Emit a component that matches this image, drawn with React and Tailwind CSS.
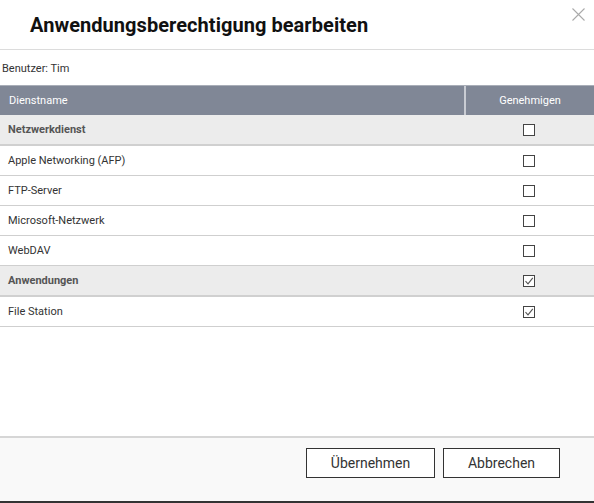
import React from "react";

function Box({ checked }) {
  return (
    <span className="inline-flex h-[12px] w-[12px] items-center justify-center border border-[#444] bg-white">
      {checked && (
        <svg width="10" height="10" viewBox="0 0 10 10">
          <path d="M1.5 5.2 L4 7.8 L8.8 1.8" fill="none" stroke="#555" strokeWidth="1.1" />
        </svg>
      )}
    </span>
  );
}

function Row({ label, checked, section }) {
  return (
    <div
      className={
        "flex items-center " +
        (section ? "h-[31px] bg-[#ececec] border-b-2 border-[#d0d0d0] font-bold text-[#555]" : "h-[30px] bg-white border-b border-[#cfcfcf] text-[#333]")
      }
    >
      <div className="flex-1 pl-[8px] pt-[2px]">{label}</div>
      <div className="flex w-[130px] justify-center pt-[1px]">
        <Box checked={checked} />
      </div>
    </div>
  );
}

export default function App() {
  const rows = [
    { label: "Netzwerkdienst", section: true },
    { label: "Apple Networking (AFP)" },
    { label: "FTP-Server" },
    { label: "Microsoft-Netzwerk" },
    { label: "WebDAV" },
    { label: "Anwendungen", section: true, checked: true },
    { label: "File Station", checked: true },
  ];
  return (
    <div className="relative flex h-[503px] w-[594px] flex-col bg-white text-[11px] font-['Roboto',sans-serif]">
      <div className="flex h-[50px] shrink-0 items-center border-b border-[#dcdcdc] pl-[30px]">
        <h1 className="text-[20px] font-bold text-[#111] tracking-[0.05px]">Anwendungsberechtigung bearbeiten</h1>
      </div>
      <button className="absolute right-[9px] top-[8px]">
        <svg width="13" height="13" viewBox="0 0 13 13">
          <path d="M0.5 0.5 L12.5 12.5 M12.5 0.5 L0.5 12.5" stroke="#aaa" strokeWidth="1.1" />
        </svg>
      </button>
      <div className="flex h-[35px] shrink-0 items-center pl-[2px] pt-[3px] text-[#333]">Benutzer: Tim</div>
      <div className="flex h-[30px] shrink-0 items-center border-t border-[#a9aeb8] bg-[#808796] text-white">
        <div className="flex-1 pl-[9px] pt-[1px]">Dienstname</div>
        <div className="h-full w-[2px] bg-[#c9ccd3]" />
        <div className="flex w-[128px] justify-center pt-[1px]">Genehmigen</div>
      </div>
      <div className="flex-1">
        {rows.map((r) => (
          <Row key={r.label} {...r} />
        ))}
      </div>
      <div className="flex h-[67px] shrink-0 items-start justify-end gap-[8px] border-t-2 border-[#d6d6d6] bg-[#f9f9f9] pr-[34px] pt-[10px] border-b-2 border-b-[#333]">
        <button className="h-[30px] w-[129px] border border-[#333] bg-white text-[14px] text-[#333]">Übernehmen</button>
        <button className="h-[30px] w-[117px] border border-[#333] bg-white text-[14px] text-[#333]">Abbrechen</button>
      </div>
    </div>
  );
}
